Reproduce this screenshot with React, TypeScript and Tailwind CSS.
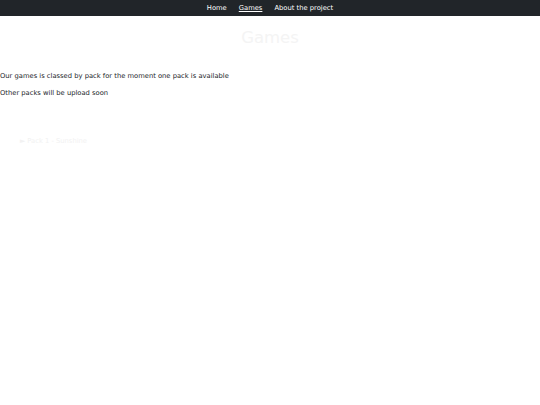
export default function App() {
  return (
    <div className="min-h-[405px] bg-white font-['DejaVu_Sans',sans-serif] text-[6.75px] text-[#212529]">
      {/* nav */}
      <nav className="flex h-[16px] items-center justify-center gap-[12px] bg-[#212529] text-white">
        <a>Home</a>
        <a className="underline">Games</a>
        <a>About the project</a>
      </nav>

      {/* title */}
      <h1 className="mt-[10px] text-center text-[16.5px] leading-[24px] text-[#f4f4f4]">Games</h1>

      {/* intro */}
      <p className="mt-[21px]">Our games is classed by pack for the moment one pack is available</p>
      <p className="mt-[7px]">Other packs will be upload soon</p>

      {/* packs */}
      <div className="mt-[38px] pl-[20px] text-[#f2f2f2]">► Pack 1 - Sunshine</div>
    </div>
  );
}
